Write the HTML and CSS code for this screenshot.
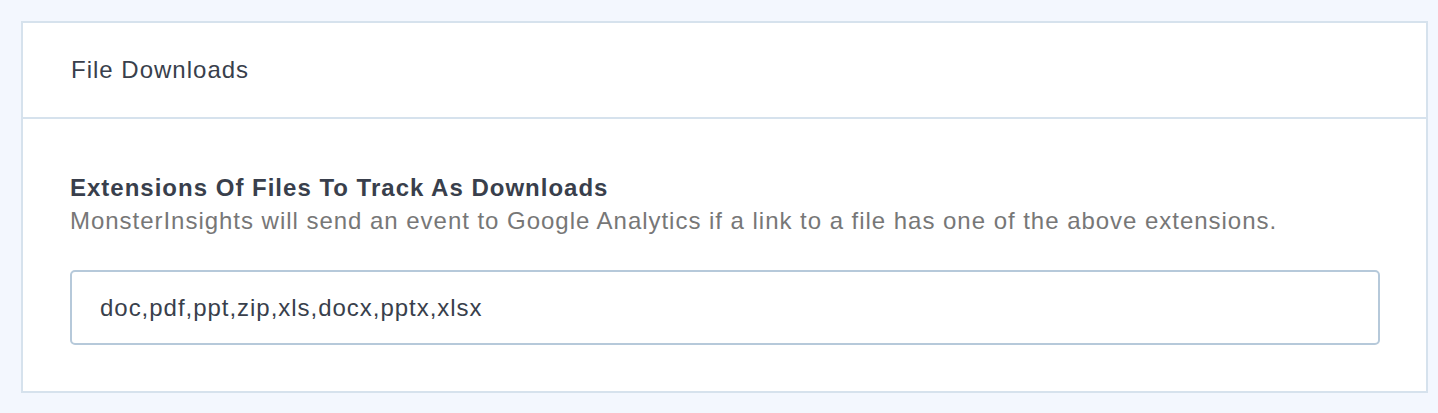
FILE: index.html
```html
<!DOCTYPE html>
<html>
<head>
<meta charset="utf-8">
<link rel="stylesheet" href="styles.css">
</head>
<body>
<div class="page">
  <section class="card">
    <header class="card-header">
      <h2 class="card-title">File Downloads</h2>
    </header>
    <div class="card-body">
      <label class="field-label" for="ext">Extensions Of Files To Track As Downloads</label>
      <p class="field-desc">MonsterInsights will send an event to Google Analytics if a link to a file has one of the above extensions.</p>
      <input class="field-input" id="ext" type="text" value="doc,pdf,ppt,zip,xls,docx,pptx,xlsx">
    </div>
  </section>
</div>
</body>
</html>
```
FILE: styles.css
```css
* { box-sizing: border-box; }
html, body {
  margin: 0;
  padding: 0;
  background: #f3f7fe;
  font-family: "Liberation Sans", Arial, sans-serif;
}
.page {
  padding: 21px 11px 20px 21px;
}
.card {
  background: #fff;
  border: 2px solid #d6e2ed;
  width: 1407px;
}
.card-header {
  height: 96px;
  border-bottom: 2px solid #d6e2ed;
  padding: 0 48px;
  display: flex;
  align-items: center;
}
.card-title {
  margin: 0;
  font-size: 24px;
  letter-spacing: 1px;
  font-weight: normal;
  color: #393f4c;
}
.card-body {
  padding: 52px 46px 46px 47px;
}
.field-label {
  display: block;
  font-size: 24px;
  letter-spacing: 1px;
  font-weight: bold;
  color: #393f4c;
  line-height: 33px;
}
.field-desc {
  margin: 0 0 33px;
  font-size: 24px;
  letter-spacing: 0.97px;
  color: #777;
  line-height: 33px;
}
.field-input {
  display: block;
  width: 1310px;
  height: 75px;
  border: 2px solid #b6c9da;
  border-radius: 5px;
  padding: 0 28px;
  font-family: "Liberation Sans", Arial, sans-serif;
  font-size: 24px;
  letter-spacing: 0.97px;
  color: #393f4c;
  background: #fff;
  outline: none;
}
```
